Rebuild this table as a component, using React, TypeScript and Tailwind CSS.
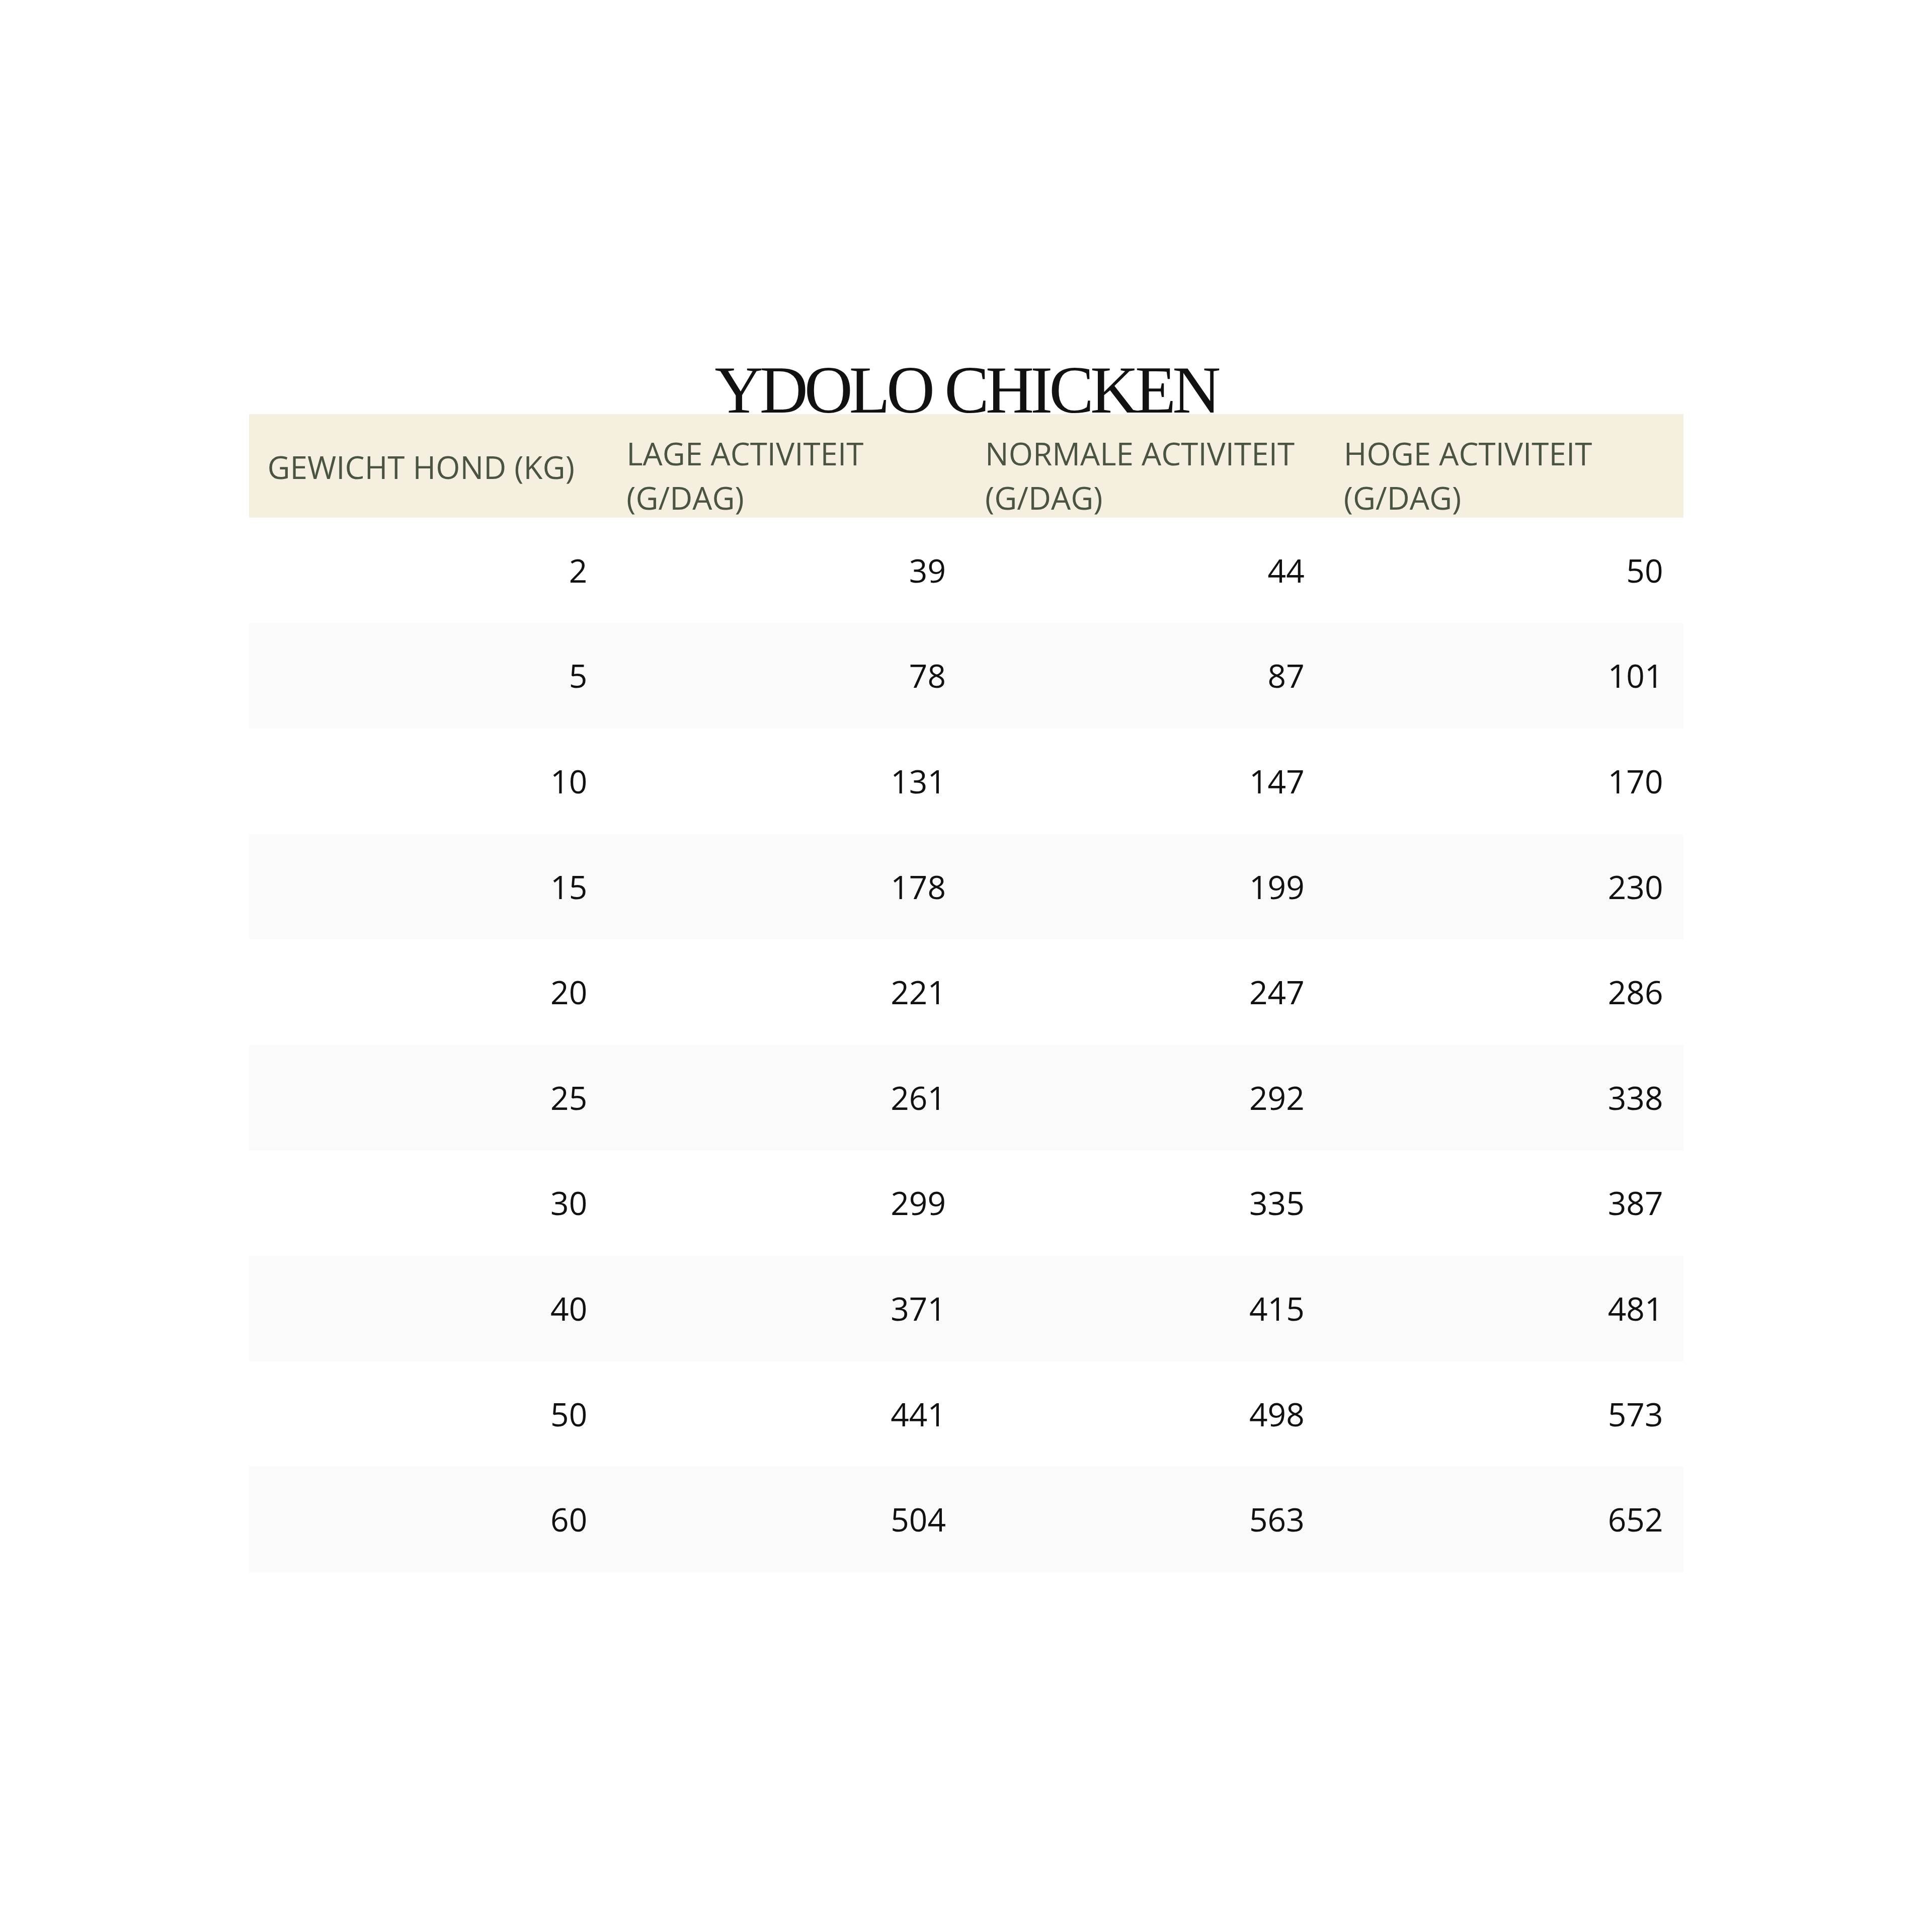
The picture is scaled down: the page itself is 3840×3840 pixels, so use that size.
import React from "react";

const rows: [string, string, string, string][] = [
  ["2", "39", "44", "50"],
  ["5", "78", "87", "101"],
  ["10", "131", "147", "170"],
  ["15", "178", "199", "230"],
  ["20", "221", "247", "286"],
  ["25", "261", "292", "338"],
  ["30", "299", "335", "387"],
  ["40", "371", "415", "481"],
  ["50", "441", "498", "573"],
  ["60", "504", "563", "652"],
];

export default function App() {
  return (
    <div className="w-[3840px] h-[3840px] bg-white">
      <div className="w-[2851px] mx-auto pt-[727px]">
        <h1
          className="text-center text-[133px] leading-[96px] tracking-[-7px] text-[#111] font-normal"
          style={{ fontFamily: '"Liberation Serif", "Times New Roman", serif' }}
        >
          YDOLO CHICKEN
        </h1>
        <div
          className="grid grid-cols-4 bg-[#f5efe0] text-[#4b5341] text-[62px] leading-[88px] h-[206px]"
          style={{ fontFamily: '"Open Sans", "Noto Sans", sans-serif' }}
        >
          <div className="flex items-center pl-[37px]">GEWICHT HOND (KG)</div>
          <div className="flex flex-col justify-center pl-[38px] pt-[34px]">
            <span>LAGE ACTIVITEIT</span>
            <span>(G/DAG)</span>
          </div>
          <div className="flex flex-col justify-center pl-[38px] pt-[34px]">
            <span>NORMALE ACTIVITEIT</span>
            <span>(G/DAG)</span>
          </div>
          <div className="flex flex-col justify-center pl-[38px] pt-[34px]">
            <span>HOGE ACTIVITEIT</span>
            <span>(G/DAG)</span>
          </div>
        </div>
        <div style={{ fontFamily: '"Open Sans", "Noto Sans", sans-serif' }}>
          {rows.map((r, i) => (
            <div
              key={i}
              className={
                "grid grid-cols-4 h-[209.6px] text-[64px] text-[#111] " +
                (i % 2 === 1 ? "bg-[#fafafa]" : "bg-white")
              }
            >
              {r.map((v, j) => (
                <div key={j} className="flex items-center justify-end pr-[40px]">
                  {v}
                </div>
              ))}
            </div>
          ))}
        </div>
      </div>
    </div>
  );
}
